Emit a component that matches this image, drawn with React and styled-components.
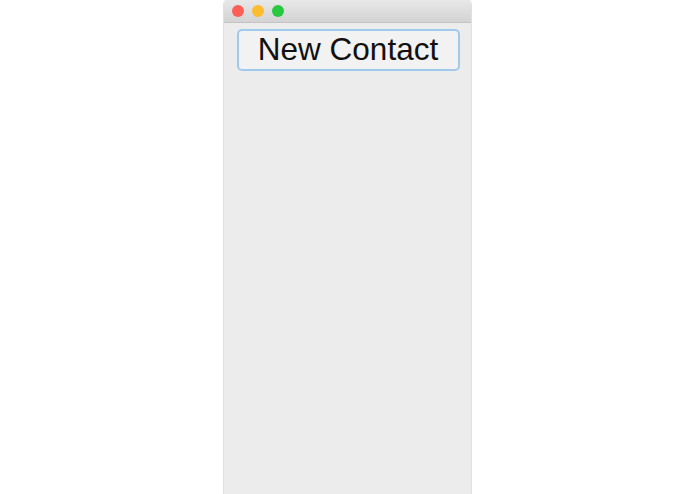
import React from "react";
import styled, { createGlobalStyle } from "styled-components";

const Global = createGlobalStyle`
  html, body { margin: 0; padding: 0; background: #ffffff; }
  body { font-family: "Liberation Sans", Arial, sans-serif; overflow: hidden; }
`;

const Page = styled.div`
  display: flex;
  justify-content: flex-start;
  padding-left: 224px;
  height: 494px;
`;

const Window = styled.div`
  width: 247px;
  height: 500px;
  display: flex;
  flex-direction: column;
  background: #ececec;
  border-radius: 5px 5px 0 0;
  box-shadow: 0 0 0 1px rgba(0, 0, 0, 0.12);
  overflow: hidden;
`;

const TitleBar = styled.div`
  height: 22px;
  display: flex;
  align-items: center;
  gap: 8px;
  padding-left: 8px;
  background: linear-gradient(#e8e8e8, #d3d3d3);
  border-bottom: 1px solid #c4c4c4;
`;

const Light = styled.span`
  width: 12px;
  height: 12px;
  border-radius: 50%;
  background: ${(p) => p.$color};
`;

const Content = styled.div`
  display: flex;
  flex-direction: column;
  align-items: center;
  padding-top: 6px;
`;

const Button = styled.button`
  width: 223px;
  height: 42px;
  margin-left: 1px;
  box-sizing: border-box;
  border: 2px solid #9fcaee;
  border-radius: 5px;
  background: #f2f2f2;
  font-family: "Liberation Sans", Arial, sans-serif;
  font-size: 31.5px;
  color: #111;
  padding: 0;
  line-height: 1;
`;

export default function App() {
  return (
    <>
      <Global />
      <Page>
        <Window>
          <TitleBar>
            <Light $color="#fc5f57" />
            <Light $color="#fdbc2e" />
            <Light $color="#28c840" />
          </TitleBar>
          <Content>
            <Button>New Contact</Button>
          </Content>
        </Window>
      </Page>
    </>
  );
}
